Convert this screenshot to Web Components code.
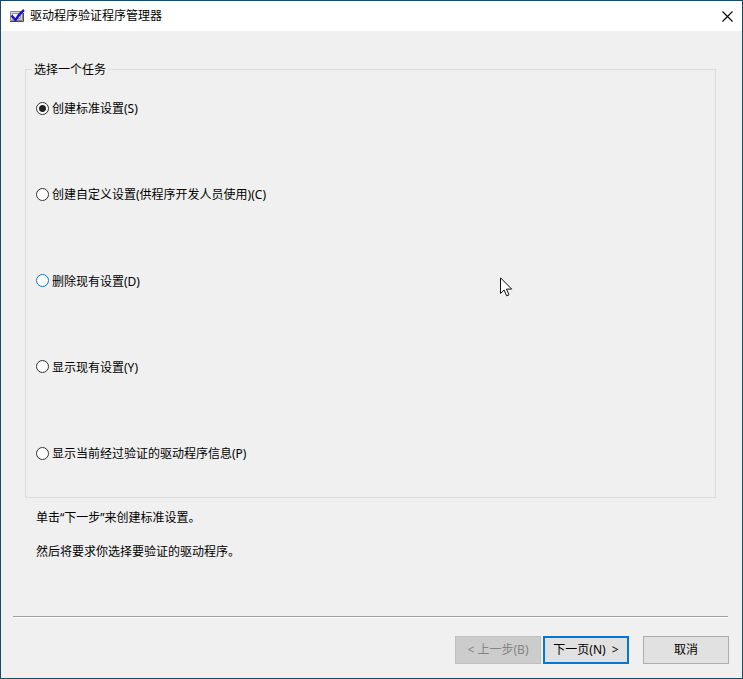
<!DOCTYPE html>
<html lang="zh-CN">
<head>
<meta charset="utf-8">
<title>驱动程序验证程序管理器</title>
<style>
html, body { height: 100%; margin: 0; }
body {
  font: 12px/16px "Noto Sans", "Noto Sans CJK SC", sans-serif;
  color: #000;
  background: #f0f0f0;
}
</style>
</head>
<body>
<wizard-window>
  <title-bar slot="title">驱动程序验证程序管理器</title-bar>
  <task-picker></task-picker>
  <task-hint>
    <p>单击“下一步”来创建标准设置。</p>
    <p>然后将要求你选择要验证的驱动程序。</p>
  </task-hint>
  <wizard-button slot="nav" state="disabled">&lt; 上一步(B)</wizard-button>
  <wizard-button slot="nav" state="default">下一页(N) &nbsp;&gt;</wizard-button>
  <wizard-button slot="cancel">取消</wizard-button>
  <mouse-pointer slot="pointer"></mouse-pointer>
</wizard-window>

<script>
function define(name, html, setup) {
  const template = document.createElement('template');
  template.innerHTML = html;
  customElements.define(name, class extends HTMLElement {
    constructor() {
      super();
      this.attachShadow({ mode: 'open' }).append(template.content.cloneNode(true));
    }
    connectedCallback() { if (setup) setup(this); }
  });
}

define('wizard-window', `
<style>
  :host { display: flex; flex-direction: column; box-sizing: border-box; height: 100%; min-height: min-content;
    border: 1px solid #174b6b; background: #f0f0f0; position: relative; }
  main { flex: 1 0 auto; display: flex; flex-direction: column; padding: 29px 26px 0 24px; }
  footer { margin: 0 14px 14px 12px; padding-top: 19px; border-top: 1px solid #a0a0a0;
    box-shadow: inset 0 1px #fff; display: flex; justify-content: flex-end; gap: 14px; }
  nav { display: flex; gap: 2px; }
  footer ::slotted([slot="cancel"]) { margin-right: -1px; }
</style>
<slot name="title"></slot>
<main><slot></slot></main>
<footer><nav><slot name="nav"></slot></nav><slot name="cancel"></slot></footer>
<slot name="pointer"></slot>`);

define('title-bar', `
<style>
  :host { display: block; background: #fff; }
  header { display: flex; align-items: center; height: 30px; padding-left: 8px; }
  svg { display: block; }
  h1 { flex: 1; margin: 0 0 0 5px; font: inherit; }
  button { width: 30px; height: 30px; padding: 0; border: 0; background: none; display: grid; place-items: center; }
</style>
<header>
  <svg width="16" height="16" viewBox="0 0 16 16" aria-hidden="true">
    <path d="M1.500 3.500h12v9h-12z" fill="#d4d4d4" stroke="#8a8a8a"/>
    <path d="M1 13.500h13.500V5" fill="none" stroke="#4a4a4a"/>
    <path d="M3.500 5.500h8v5h-8z" fill="#f4f4f4" stroke="#999"/>
    <path d="M3 12h9" stroke="#888" stroke-dasharray="1 1"/>
    <path d="M2.500 7.500L6.500 12Q10 6 15 2" fill="none" stroke="#1a0fc8" stroke-width="2.400"/>
  </svg>
  <h1><slot></slot></h1>
  <button type="button" aria-label="关闭">
    <svg width="11" height="11" viewBox="0 0 11 11"><path d="M.5.5l10 10M10.500.5l-10 10" stroke="#000" stroke-width="1.100"/></svg>
  </button>
</header>`);

define('task-picker', `
<style>
  :host { flex: 1 0 auto; display: flex; flex-direction: column; }
  fieldset { flex: 1 0 auto; box-sizing: border-box; margin: 0; min-width: 0;
    padding: 21px 10px 35px; border: 1px solid #dcdcdc; }
  legend { margin-left: -4px; padding: 2px 2px 0; }
  .options { display: grid; align-content: space-between; justify-items: start; gap: 12px;
    box-sizing: border-box; height: 100%; }
  label { display: flex; align-items: center; gap: 3px; }
  span { padding-top: 2px; }
  input { appearance: none; box-sizing: border-box; width: 13px; height: 13px; margin: 0;
    border: 1px solid #333; border-radius: 50%; background: #fff; }
  input:checked { background: radial-gradient(circle, #222 3px, #fff 4px); }
  .hot input { border-color: #0078d7; }
</style>
<fieldset>
  <legend>选择一个任务</legend>
  <div class="options">
    <label><input type="radio" name="task" checked><span>创建标准设置(S)</span></label>
    <label><input type="radio" name="task"><span>创建自定义设置(供程序开发人员使用)(C)</span></label>
    <label class="hot"><input type="radio" name="task"><span>删除现有设置(D)</span></label>
    <label><input type="radio" name="task"><span>显示现有设置(Y)</span></label>
    <label><input type="radio" name="task"><span>显示当前经过验证的驱动程序信息(P)</span></label>
  </div>
</fieldset>`);

define('task-hint', `
<style>
  :host { display: block; padding: 12px 11px 56px; }
  ::slotted(p) { margin: 0 0 18px; }
  ::slotted(p:last-child) { margin: 0; }
</style>
<slot></slot>`);

define('wizard-button', `
<style>
  :host { display: block; }
  button { box-sizing: border-box; min-width: 86px; height: 28px; padding: 0 6px; font: inherit; color: #000;
    border: 1px solid #adadad; border-radius: 0; background: #e1e1e1; white-space: nowrap; }
  :host([state="default"]) button { border: 2px solid #0078d7; padding: 0 5px; }
  button:disabled { color: #838383; background: #ccc; border-color: #bfbfbf; }
</style>
<button type="button"><slot></slot></button>`,
  el => { el.shadowRoot.querySelector('button').disabled = el.getAttribute('state') === 'disabled'; });

define('mouse-pointer', `
<style>:host { position: absolute; left: 499px; top: 276px; pointer-events: none; } svg { display: block; }</style>
<svg width="13" height="21" viewBox="0 0 13 21" aria-hidden="true">
  <path d="M.5.8v15.700l3.600-3.500 2.500 5.800 2.400-1-2.500-5.700h5.200z" fill="#fff" stroke="#111"/>
</svg>`);
</script>
</body>
</html>
